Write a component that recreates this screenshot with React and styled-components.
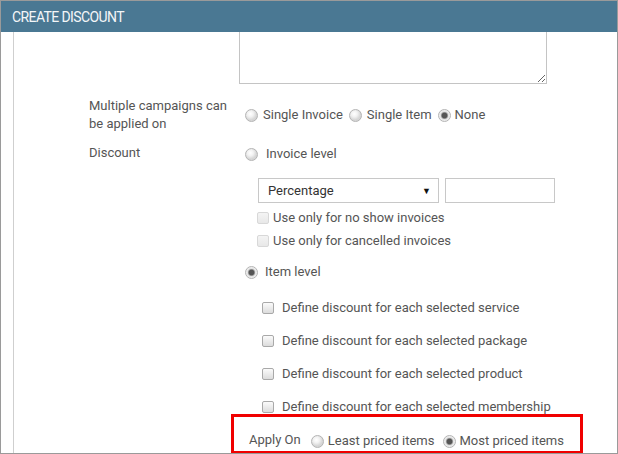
import React from 'react';
import styled, { createGlobalStyle } from 'styled-components';

const GlobalStyle = createGlobalStyle`
  html, body { margin: 0; padding: 0; background: #fff; }
  body { font-family: Roboto, "Liberation Sans", Arial, sans-serif; }
`;

const Frame = styled.div`
  width: 618px;
  height: 454px;
  box-sizing: border-box;
  border: 1px solid #9a9a9a;
  overflow: hidden;
  display: flex;
  flex-direction: column;
`;

const Header = styled.div`
  height: 31px;
  flex: none;
  background: #4a7893;
  color: #f4f6f8;
  font-size: 14px;
  font-weight: 400;
  letter-spacing: -0.6px;
  display: flex;
  align-items: center;
  padding-left: 11px;
`;

const Panel = styled.div`
  flex: 1;
  margin-left: 12px;
  border-left: 1px solid #cfcfcf;
  padding-left: 75px;
`;

const Form = styled.div`
  display: grid;
  grid-template-columns: 150px 1fr;
  color: #555;
  font-size: 13px;
`;

const Label = styled.div`
  line-height: 18px;
  margin-top: ${p => p.$mt || 0}px;
`;

const Value = styled.div`
  margin-top: ${p => p.$mt || 0}px;
  display: flex;
  flex-direction: column;
  align-items: flex-start;
  justify-content: ${p => p.$center ? 'center' : 'flex-start'};
`;

const Textarea = styled.textarea`
  width: 308px;
  height: 52px;
  box-sizing: border-box;
  border: 1px solid #c4c4c4;
  border-top: none;
  resize: both;
  margin: 0;
  display: block;
`;

const Inline = styled.div`
  display: flex;
  align-items: center;
  line-height: 16px;
  height: 16px;
  margin-top: ${p => p.$mt || 0}px;
  padding-left: ${p => p.$indent || 0}px;
`;

const Choice = styled.label`
  display: flex;
  align-items: center;
  margin-right: ${p => p.$mr || 0}px;
`;

const Radio = styled.span`
  width: 11px;
  height: 11px;
  flex: none;
  border-radius: 50%;
  border: 1px solid #b4b4b4;
  background: ${p => p.$checked
    ? 'radial-gradient(circle, #555 0 2.5px, #8a8a8a 3px, #e2e2e2 4px, #f6f6f6 6px)'
    : 'radial-gradient(circle at 40% 35%, #fff 0, #f2f2f2 3px, #d6d6d6 6px)'};
  margin-right: ${p => p.$gap || 5}px;
`;

const Check = styled.span`
  width: 10px;
  height: 10px;
  flex: none;
  border-radius: 2px;
  border: 1px solid ${p => p.$disabled ? '#d8d8d8' : '#a9a9a9'};
  background: ${p => p.$disabled
    ? 'linear-gradient(#f4f4f4, #e8e8e8)'
    : 'linear-gradient(#fbfbfb, #dcdcdc)'};
  margin-right: ${p => p.$gap || 5}px;
`;

const Controls = styled.div`
  display: flex;
  gap: 6px;
  margin-top: 16px;
  padding-left: 19px;
`;

const SelectBox = styled.div`
  width: 181px;
  height: 25px;
  box-sizing: border-box;
  border: 1px solid #c8c8c8;
  display: flex;
  align-items: center;
  justify-content: space-between;
  padding: 0 7px 0 9px;
  color: #333;
  font-size: 13px;
`;

const Arrow = styled.span`
  font-size: 9px;
  color: #111;
`;

const TextInput = styled.input`
  width: 110px;
  height: 25px;
  box-sizing: border-box;
  border: 1px solid #c8c8c8;
  margin: 0;
  padding: 0 4px;
`;

const ApplyBox = styled.div`
  margin-top: -1px;
  margin-left: -8px;
  width: 352px;
  height: 40px;
  box-sizing: border-box;
  border: 3px solid #f00000;
  display: flex;
  align-items: flex-end;
  padding: 0 0 2px 15px;
  line-height: 16px;
`;

const ApplyLabel = styled.span`
  margin-right: 10px;
  position: relative;
  top: -1px;
`;

const defines = ['service', 'package', 'product', 'membership'];

export default function App() {
  return (
    <>
      <GlobalStyle />
      <Frame>
        <Header>CREATE DISCOUNT</Header>
        <Panel>
          <Form>
            <div />
            <Value>
              <Textarea defaultValue="" />
            </Value>

            <Label $mt={13}>Multiple campaigns can<br />be applied on</Label>
            <Value $mt={13} $center>
              <Inline $indent={6}>
                <Choice $mr={6}><Radio $gap={5} />Single Invoice</Choice>
                <Choice $mr={6}><Radio $gap={5} />Single Item</Choice>
                <Choice><Radio $checked $gap={4} />None</Choice>
              </Inline>
            </Value>

            <Label $mt={11}>Discount</Label>
            <Value $mt={13}>
              <Inline $indent={6}>
                <Choice><Radio $gap={8} />Invoice level</Choice>
              </Inline>
              <Controls>
                <SelectBox>Percentage<Arrow>▼</Arrow></SelectBox>
                <TextInput />
              </Controls>
              <Inline $mt={7} $indent={18}>
                <Choice><Check $disabled $gap={4} />Use only for no show invoices</Choice>
              </Inline>
              <Inline $mt={7} $indent={18}>
                <Choice><Check $disabled $gap={4} />Use only for cancelled invoices</Choice>
              </Inline>
              <Inline $mt={15} $indent={6}>
                <Choice><Radio $checked $gap={7} />Item level</Choice>
              </Inline>
              {defines.map((d, i) => (
                <Inline key={d} $mt={i === 0 ? 20 : 17} $indent={23}>
                  <Choice><Check $gap={8} />Define discount for each selected {d}</Choice>
                </Inline>
              ))}
              <ApplyBox>
                <ApplyLabel>Apply On</ApplyLabel>
                <Choice $mr={9}><Radio $gap={4} />Least priced items</Choice>
                <Choice><Radio $checked $gap={3} />Most priced items</Choice>
              </ApplyBox>
            </Value>
          </Form>
        </Panel>
      </Frame>
    </>
  );
}
